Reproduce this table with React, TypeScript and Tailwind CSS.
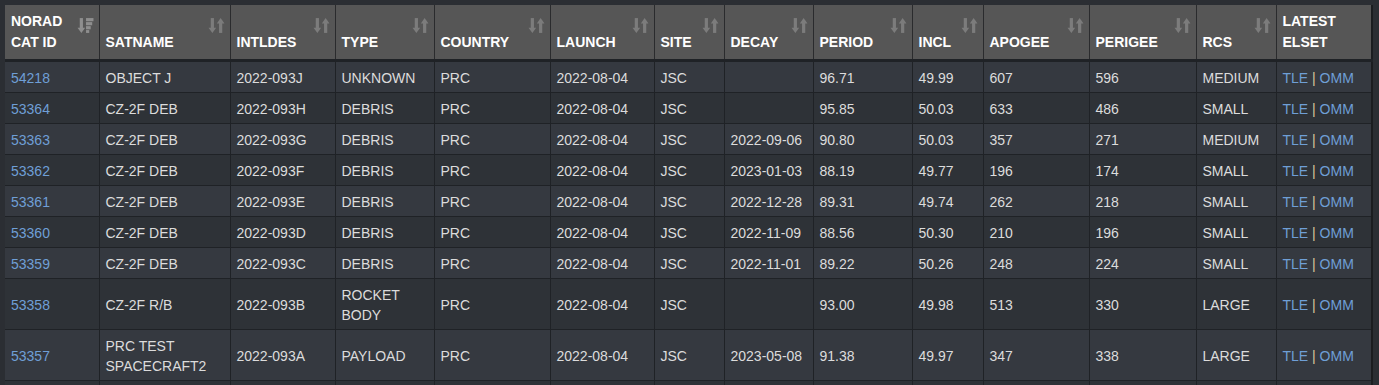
import React from "react";

type Row = {
  id: string;
  name: string;
  intldes: string;
  type: string;
  country: string;
  launch: string;
  site: string;
  decay: string;
  period: string;
  incl: string;
  apogee: string;
  perigee: string;
  rcs: string;
};

const rows: Row[] = [
  { id: "54218", name: "OBJECT J", intldes: "2022-093J", type: "UNKNOWN", country: "PRC", launch: "2022-08-04", site: "JSC", decay: "", period: "96.71", incl: "49.99", apogee: "607", perigee: "596", rcs: "MEDIUM" },
  { id: "53364", name: "CZ-2F DEB", intldes: "2022-093H", type: "DEBRIS", country: "PRC", launch: "2022-08-04", site: "JSC", decay: "", period: "95.85", incl: "50.03", apogee: "633", perigee: "486", rcs: "SMALL" },
  { id: "53363", name: "CZ-2F DEB", intldes: "2022-093G", type: "DEBRIS", country: "PRC", launch: "2022-08-04", site: "JSC", decay: "2022-09-06", period: "90.80", incl: "50.03", apogee: "357", perigee: "271", rcs: "MEDIUM" },
  { id: "53362", name: "CZ-2F DEB", intldes: "2022-093F", type: "DEBRIS", country: "PRC", launch: "2022-08-04", site: "JSC", decay: "2023-01-03", period: "88.19", incl: "49.77", apogee: "196", perigee: "174", rcs: "SMALL" },
  { id: "53361", name: "CZ-2F DEB", intldes: "2022-093E", type: "DEBRIS", country: "PRC", launch: "2022-08-04", site: "JSC", decay: "2022-12-28", period: "89.31", incl: "49.74", apogee: "262", perigee: "218", rcs: "SMALL" },
  { id: "53360", name: "CZ-2F DEB", intldes: "2022-093D", type: "DEBRIS", country: "PRC", launch: "2022-08-04", site: "JSC", decay: "2022-11-09", period: "88.56", incl: "50.30", apogee: "210", perigee: "196", rcs: "SMALL" },
  { id: "53359", name: "CZ-2F DEB", intldes: "2022-093C", type: "DEBRIS", country: "PRC", launch: "2022-08-04", site: "JSC", decay: "2022-11-01", period: "89.22", incl: "50.26", apogee: "248", perigee: "224", rcs: "SMALL" },
  { id: "53358", name: "CZ-2F R/B", intldes: "2022-093B", type: "ROCKET BODY", country: "PRC", launch: "2022-08-04", site: "JSC", decay: "", period: "93.00", incl: "49.98", apogee: "513", perigee: "330", rcs: "LARGE" },
  { id: "53357", name: "PRC TEST SPACECRAFT2", intldes: "2022-093A", type: "PAYLOAD", country: "PRC", launch: "2022-08-04", site: "JSC", decay: "2023-05-08", period: "91.38", incl: "49.97", apogee: "347", perigee: "338", rcs: "LARGE" },
];

const headers: { label: React.ReactNode; w: string; sort: "desc" | "both" | null }[] = [
  { label: <>NORAD<br />CAT ID</>, w: "w-[94px]", sort: "desc" },
  { label: "SATNAME", w: "w-[131px]", sort: "both" },
  { label: "INTLDES", w: "w-[105px]", sort: "both" },
  { label: "TYPE", w: "w-[99px]", sort: "both" },
  { label: "COUNTRY", w: "w-[116px]", sort: "both" },
  { label: "LAUNCH", w: "w-[104px]", sort: "both" },
  { label: "SITE", w: "w-[70px]", sort: "both" },
  { label: "DECAY", w: "w-[89px]", sort: "both" },
  { label: "PERIOD", w: "w-[99px]", sort: "both" },
  { label: "INCL", w: "w-[71px]", sort: "both" },
  { label: "APOGEE", w: "w-[106px]", sort: "both" },
  { label: "PERIGEE", w: "w-[107px]", sort: "both" },
  { label: "RCS", w: "w-[80px]", sort: "both" },
  { label: <>LATEST<br />ELSET</>, w: "w-[96px]", sort: null },
];

function SortIcon({ kind }: { kind: "desc" | "both" }) {
  return (
    <svg width="17" height="17" viewBox="0 0 16 16" className="absolute top-[12px] right-[5px]">
      <g fill={kind === "desc" ? "#8e8e8e" : "#7c7c7c"}>
        <rect x="2.6" y="1" width="3" height="9.5" />
        <polygon points="0.5,10 7.7,10 4.1,15" />
        {kind === "both" ? (
          <>
            <polygon points="8.3,6 15.5,6 11.9,1" />
            <rect x="10.4" y="5.5" width="3" height="9.5" />
          </>
        ) : (
          <>
            <rect x="8.5" y="1" width="7" height="3" />
            <rect x="8.5" y="4.8" width="5.8" height="3" />
            <rect x="8.5" y="8.6" width="4.4" height="3" />
            <rect x="8.5" y="12.3" width="3" height="2.7" />
          </>
        )}
      </g>
    </svg>
  );
}

const cellCls = "align-middle leading-[20px] pl-[6px] pr-[4px] pt-[6px] pb-[4px]";

export default function App() {
  return (
    <div className="min-h-screen bg-[#2b2e33] pl-[5px] pt-[5px] font-['Liberation_Sans',Arial,sans-serif]">
      <table className="table-fixed border-collapse w-[1368px] text-[14px] border-r-2 border-r-[#1b1d20]">
        <colgroup>
          {headers.map((h, i) => (
            <col key={i} className={h.w} />
          ))}
        </colgroup>
        <thead>
          <tr className="bg-[#565656] border-b-[3px] border-b-[#1f2226]">
            {headers.map((h, i) => (
              <th
                key={i}
                className="relative align-bottom text-left font-bold text-white leading-[21px] pl-[6px] pr-[4px] pt-[6px] pb-[6px] border-l border-l-[#2a2b2d] first:border-l-0"
              >
                {h.label}
                {!!h.sort && <SortIcon kind={h.sort} />}
              </th>
            ))}
          </tr>
        </thead>
        <tbody>
          {rows.map((r, idx) => {
            const cells = [r.name, r.intldes, r.type, r.country, r.launch, r.site, r.decay, r.period, r.incl, r.apogee, r.perigee, r.rcs];
            return (
              <tr
                key={r.id}
                className={(idx % 2 === 0 ? "bg-[#353940]" : "bg-[#2e3237]") + " border-b border-b-[#1f2226]"}
              >
                <td className={cellCls + " text-[#6f9fd6]"}>{r.id}</td>
                {cells.map((c, i) => (
                  <td key={i} className={cellCls + " text-[#dcdcdc] border-l border-l-[#1f2226]"}>
                    {c}
                  </td>
                ))}
                <td className={cellCls + " border-l border-l-[#1f2226] whitespace-nowrap"}>
                  <a className="text-[#6f9fd6]">TLE</a>
                  <span className="text-[#d8c99c]"> | </span>
                  <a className="text-[#6f9fd6]">OMM</a>
                </td>
              </tr>
            );
          })}
          <tr className="bg-[#2e3237]">
            {headers.map((h, i) => (
              <td key={i} className="h-[31px] border-l border-l-[#1f2226] first:border-l-0"></td>
            ))}
          </tr>
        </tbody>
      </table>
    </div>
  );
}
